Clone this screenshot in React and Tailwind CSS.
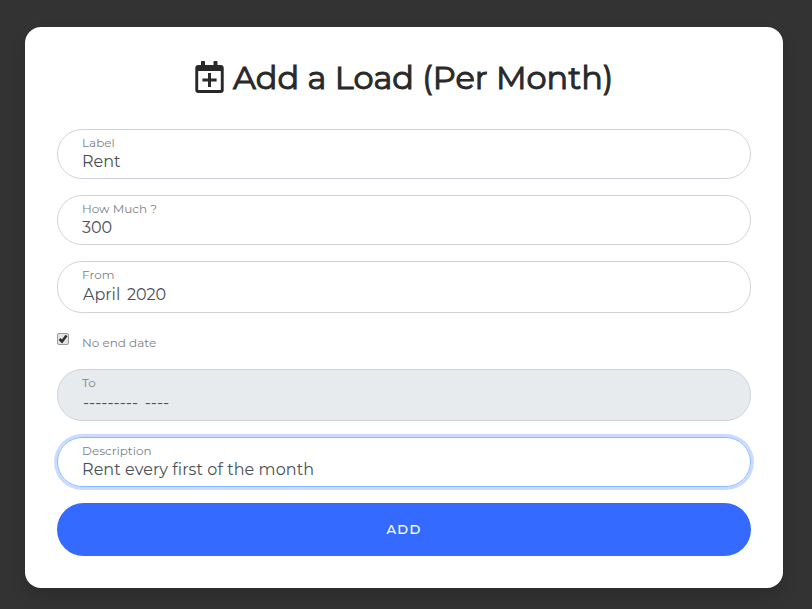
import React from "react";

function Field({ id, label, value, valueClass, boxClass, disabled = false }) {
  return (
    <div className={`flex flex-col items-start rounded-[25px] border px-6 pt-[5px] ${boxClass}`}>
      <label htmlFor={id} className="block text-[12px] leading-4 whitespace-pre text-[#808183]">
        {label}
      </label>
      <input
        id={id}
        type="text"
        defaultValue={value}
        disabled={disabled}
        className={`block h-5 w-full bg-transparent text-[16px] leading-5 text-[#495057] outline-none ${valueClass}`}
      />
    </div>
  );
}

function CalendarPlus() {
  return (
    <svg viewBox="0 0 29 32" className="h-8 w-[29px] shrink-0" fill="#292929" aria-hidden="true">
      <path
        fillRule="evenodd"
        d="M3 4H6V.7Q6 0 6.700 0H9.300Q10 0 10 .7V4H18.500V.7Q18.500 0 19.200 0H21.800Q22.500 0 22.500 .7V4H25.700Q28.700 4 28.700 7V29Q28.700 32 25.700 32H3.300Q.3 32 .3 29V7Q.3 4 3.300 4ZM3.200 10V28.600Q3.200 29.100 3.700 29.100H25.300Q25.800 29.100 25.800 28.600V10Z"
      />
      <path d="M13 12H16V17.600H21.600V20.500H16V26H13V20.500H7.400V17.600H13Z" />
    </svg>
  );
}

export default function App() {
  return (
    <main className="h-[609px] w-[812px] overflow-hidden bg-[#333333] pt-[27px] pl-[25px] font-['Montserrat','Inter',sans-serif]">
      <form className="flex h-[561px] w-[758px] flex-col rounded-[16px] bg-white px-8 pt-[29px] shadow-[0_8px_16px_rgba(0,0,0,0.15)]">
        <header className="mb-[31px] ml-[138px] flex h-[42px] items-center gap-[9px]">
          <CalendarPlus />
          <h1 className="pt-[2px] text-[32px] leading-[40px] font-normal whitespace-nowrap text-[#292929] [-webkit-text-stroke:1px_#292929]">
            Add a Load (Per Month)
          </h1>
        </header>
        <Field id="label" label="Label" value="Rent" valueClass="mt-px" boxClass="mb-4 h-[50px] border-[#ced4da]" />
        <Field id="amount" label="How Much ?" value="300" valueClass="mt-px" boxClass="mb-4 h-[50px] border-[#ced4da]" />
        <Field id="from" label="From" value="April 2020" valueClass="mt-[2px] pl-px [word-spacing:2.5px]" boxClass="mb-4 h-[52px] border-[#ced4da]" />
        <div className="mb-4 flex h-6 items-start">
          <span role="checkbox" aria-checked="true" className="mt-1 flex size-3 shrink-0 items-center justify-center rounded-[2px] border border-[#999999] bg-[#e4e4e4]">
            <svg viewBox="0 0 10 10" className="size-[10px]" fill="none" stroke="#303030" strokeWidth="2.5">
              <path d="M1.500 5 L4 7.500 L8.500 1.500" />
            </svg>
          </span>
          <span className="mt-[6px] ml-[13px] text-[12px] leading-4 text-[#808183]">No end date</span>
        </div>
        <Field id="to" label="To" value="--------- ----" disabled valueClass="mt-[2px] pl-px [word-spacing:2.5px]" boxClass="mb-4 h-[52px] border-[#ced4da] bg-[#e7ebee]" />
        <Field id="description" label="Description" value="Rent every first of the month" valueClass="mt-px tracking-[0.07px]" boxClass="mb-4 h-[50px] border-[#80bdff] ring-3 ring-[#ccdaff]" />
        <button type="button" className="h-[53px] rounded-[27px] bg-[#346aff] text-[13px] font-medium tracking-[1.3px] text-white [-webkit-text-stroke:0.1px_white]">
          ADD
        </button>
      </form>
    </main>
  );
}
